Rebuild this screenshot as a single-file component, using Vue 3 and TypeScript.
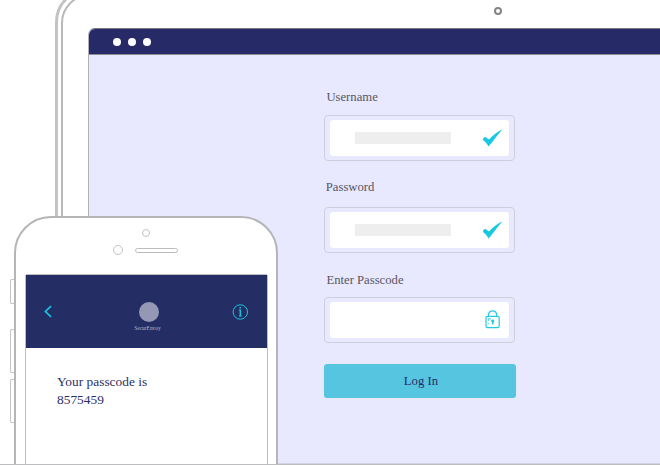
<script setup lang="ts">
interface Field {
  id: string
  label: string
  filled: boolean
}

const fields: Field[] = [
  { id: 'username', label: 'Username', filled: true },
  { id: 'password', label: 'Password', filled: true },
  { id: 'passcode', label: 'Enter Passcode', filled: false },
]

const passcode = '8575459'
const sideKeys = ['mute', 'up', 'down']
</script>

<template>
  <main class="scene">
    <section class="laptop">
      <div class="bezel">
        <span class="webcam"></span>
        <div class="window">
          <header class="titlebar">
            <i v-for="n in 3" :key="n" class="dot"></i>
          </header>
          <form class="form" @submit.prevent>
            <div v-for="field in fields" :key="field.id" class="field" :class="field.id">
              <label class="label">{{ field.label }}</label>
              <div class="frame">
                <div class="input">
                  <span v-if="field.filled" class="placeholder"></span>
                  <svg v-if="field.filled" class="check" viewBox="0 0 20 18">
                    <path d="M0 9.6 2.2 7.8 6 10.4C9.8 6.2 14.4 2.7 19.5.2 14.9 5.2 10.8 11.4 5.6 17.6 4.2 14.8 2.5 12.8.2 11.2Z" />
                  </svg>
                  <svg v-else class="lock" viewBox="0 0 16 19">
                    <rect x="1" y="6.3" width="13.2" height="11.4" rx="1.4" />
                    <path d="M3.5 6.1V4.8a4.1 4 0 0 1 8.2 0V6.1" />
                    <path class="thin" d="M3.3 11V8.8H5.9M3.4 12.8v1" />
                    <path class="key" d="M7.7 9.6a1.6 1.6 0 0 1 .8 3V14.6H7V12.6a1.6 1.6 0 0 1 .7-3Z" />
                  </svg>
                </div>
              </div>
            </div>
            <button class="login" type="submit">Log In</button>
          </form>
        </div>
      </div>
    </section>

    <section class="phone-wrap">
      <div class="keys">
        <i v-for="key in sideKeys" :key="key" class="key-cap" :class="key"></i>
      </div>
      <div class="phone">
        <span class="phone-camera"></span>
        <div class="earpiece">
          <span class="sensor"></span>
          <span class="speaker"></span>
        </div>
        <div class="phone-screen">
          <header class="appbar">
            <svg class="back" viewBox="0 0 9 13"><path d="M7.1 1.2 1.4 6.5 7.1 11.8" /></svg>
            <div class="brand">
              <span class="avatar"></span>
              <span class="brand-name">SecurEnvoy</span>
            </div>
            <svg class="info" viewBox="0 0 16 16">
              <circle cx="8.3" cy="8" r="7.2" />
              <path class="stem" d="M8.3 5.6V12" />
              <path d="M6.9 6.1H8.3M7 12.1H9.8" />
              <path class="stem" d="M8.2 2.9V4.4" />
            </svg>
          </header>
          <p class="message">Your passcode is<br />{{ passcode }}</p>
        </div>
      </div>
    </section>
    <div class="baseline"></div>
  </main>
</template>

<style>
body {
  margin: 0;
  background: #fff;
  overflow: hidden;
}
</style>

<style scoped>
* {
  box-sizing: border-box;
}

.scene {
  position: relative;
  width: 660px;
  height: 465px;
  overflow: hidden;
  background: #fff;
  font-family: 'Liberation Serif', serif;
}

.laptop {
  width: 885px;
  height: 502px;
  margin: -12px 0 0 55px;
  padding: 3px;
  border: 3px solid #c3c3c3;
  border-radius: 34px;
  display: flow-root;
}

.bezel {
  height: 490px;
  padding: 11px 25px 0;
  border: 2px solid #b9b9b9;
  border-radius: 29px;
  display: flex;
  flex-direction: column;
  align-items: center;
}

.webcam {
  flex: none;
  width: 8px;
  height: 8px;
  border: 2px solid #858585;
  border-radius: 50%;
}

.window {
  flex: none;
  width: 100%;
  height: 436px;
  margin-top: 13px;
  border: 1px solid #b0b0b8;
  border-top-color: #77777f;
  border-bottom-color: #d3d3e2;
  border-radius: 7px 7px 0 0;
  background: #e8e8ff;
  overflow: hidden;
}

.titlebar {
  height: 26px;
  padding-left: 23.5px;
  border-bottom: 1px solid #8c8c94;
  background: #262b67;
  display: flex;
  align-items: center;
  gap: 7px;
}

.dot {
  width: 8px;
  height: 8px;
  border-radius: 50%;
  background: #fff;
}

.form {
  width: 192px;
  margin: 34px 0 0 235.4px;
  display: flex;
  flex-direction: column;
}

.field {
  display: flex;
  flex-direction: column;
  gap: 10px;
}

.label {
  height: 16px;
  padding-left: 2px;
  font-size: 12.7px;
  line-height: 16px;
  color: #57575f;
}

.password {
  margin-top: 18px;
}

.password .label {
  padding-left: 1.4px;
}

.password .frame {
  margin-top: 2px;
}

.passcode {
  margin-top: 19px;
}

.frame {
  width: 191px;
  height: 46px;
  padding: 4px 5px;
  border: 1px solid #cfcfda;
  border-radius: 4px;
}

.passcode .frame {
  margin-top: -1px;
}

.input {
  width: 179px;
  height: 36px;
  padding: 0 6px 0 25px;
  border-radius: 3px;
  background: #fff;
  display: flex;
  align-items: center;
}

.placeholder {
  width: 96px;
  height: 12px;
  margin-top: -1px;
  background: #eee;
}

.check {
  width: 20px;
  height: 18px;
  margin: -1px 0 0 auto;
  fill: #16c8e3;
}

.lock {
  width: 16px;
  height: 19px;
  margin: -1px 2px 0 auto;
  fill: none;
  stroke: #22cbe2;
  stroke-width: 1.2;
}

.lock .thin {
  stroke-width: 0.9;
}

.lock .key {
  fill: #22cbe2;
  stroke: none;
}

.login {
  width: 192px;
  height: 34px;
  margin-top: 21px;
  padding: 0 0 0 1px;
  border: 0;
  border-radius: 3px;
  background: #56c5e0;
  color: #262b67;
  font-family: inherit;
  font-size: 12.7px;
  line-height: 34px;
}

.phone-wrap {
  position: absolute;
  left: 10px;
  top: 216px;
  display: flex;
  align-items: flex-start;
}

.keys {
  width: 4px;
  padding-top: 63px;
  display: flex;
  flex-direction: column;
}

.key-cap {
  height: 44px;
  border: 1px solid #c4c4c4;
  border-right: 0;
  border-radius: 2px 0 0 2px;
}

.key-cap.mute {
  height: 25px;
}

.key-cap.up {
  margin-top: 25px;
}

.key-cap.down {
  margin-top: 6px;
}

.phone {
  width: 264px;
  height: 290px;
  padding: 11px 9px 0;
  border: 2px solid #b5b5b8;
  border-radius: 37px;
  border-bottom-left-radius: 0;
  border-bottom-right-radius: 0;
  background: #fff;
}

.phone-camera {
  display: block;
  width: 8px;
  height: 8px;
  margin-left: 117px;
  border: 1px solid #c2c2c2;
  border-radius: 50%;
}

.earpiece {
  margin: 8px 0 0 88px;
  display: flex;
  align-items: center;
  gap: 12px;
}

.sensor {
  width: 10px;
  height: 10px;
  border: 1px solid #c2c2c2;
  border-radius: 50%;
}

.speaker {
  width: 43px;
  height: 5px;
  border: 1px solid #bcbcbc;
  border-radius: 3px;
}

.phone-screen {
  width: 243px;
  height: 210px;
  margin-top: 19px;
  border: 1px solid #bdbdc3;
  border-radius: 2px 2px 0 0;
}

.appbar {
  height: 73px;
  padding: 0 19px 0 18px;
  background: #242d64;
  display: flex;
  align-items: center;
  justify-content: space-between;
}

.back {
  width: 9px;
  height: 13px;
  fill: none;
  stroke: #18c5df;
  stroke-width: 1.7;
}

.brand {
  margin: 11px 0 0 10px;
  display: flex;
  flex-direction: column;
  align-items: center;
}

.avatar {
  width: 20px;
  height: 20px;
  margin-left: 4px;
  border-radius: 50%;
  background: #9498b4;
}

.brand-name {
  height: 8px;
  margin-top: 2px;
  font-size: 5.4px;
  line-height: 8px;
  color: #b5b8cc;
}

.info {
  width: 16px;
  height: 16px;
  fill: none;
  stroke: #18c5df;
  stroke-width: 1;
  overflow: visible;
}

.info .stem {
  stroke-width: 1.5;
}

.message {
  margin: 25px 0 0 31px;
  font-size: 13.4px;
  line-height: 18px;
  color: #2b2f68;
}

.baseline {
  position: absolute;
  left: 0;
  bottom: 0;
  width: 100%;
  height: 1px;
  background: #bdbdbf;
}
</style>
